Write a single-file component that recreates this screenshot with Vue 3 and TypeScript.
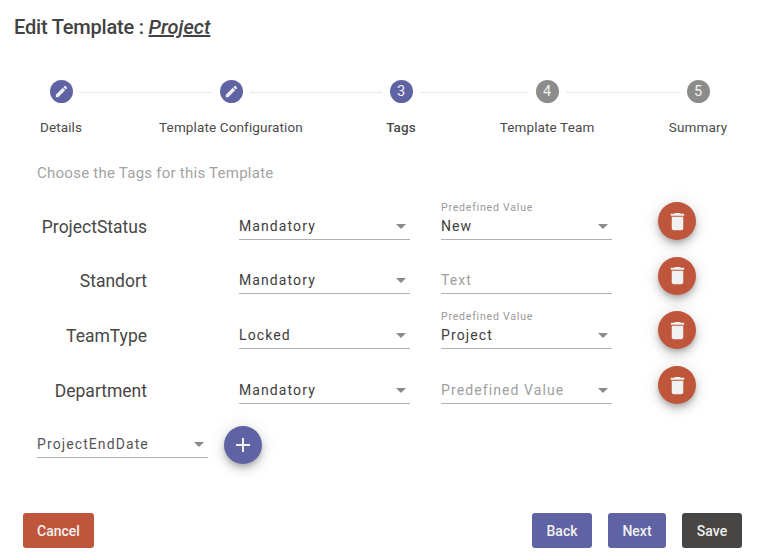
<script setup lang="ts">
interface Step { label: string; done: boolean; active: boolean; num: number }
interface Row { name: string; mode: string; floating: string; value: string; placeholder: string; arrow: boolean }

const steps: Step[] = [
  { label: 'Details', done: true, active: true, num: 1 },
  { label: 'Template Configuration', done: true, active: true, num: 2 },
  { label: 'Tags', done: false, active: true, num: 3 },
  { label: 'Template Team', done: false, active: false, num: 4 },
  { label: 'Summary', done: false, active: false, num: 5 },
]

const rows: Row[] = [
  { name: 'ProjectStatus', mode: 'Mandatory', floating: 'Predefined Value', value: 'New', placeholder: '', arrow: true },
  { name: 'Standort', mode: 'Mandatory', floating: '', value: '', placeholder: 'Text', arrow: false },
  { name: 'TeamType', mode: 'Locked', floating: 'Predefined Value', value: 'Project', placeholder: '', arrow: true },
  { name: 'Department', mode: 'Mandatory', floating: '', value: '', placeholder: 'Predefined Value', arrow: true },
]
</script>

<template>
  <div class="page">
    <h1 class="title"><span class="lead">Edit Template : </span><em>Project</em></h1>

    <div class="stepper">
      <template v-for="(s, i) in steps" :key="s.label">
        <div class="circle" :class="{ on: s.active }" :style="{ gridColumn: i * 2 + 1, gridRow: 1 }">
          <svg v-if="s.done" viewBox="0 0 24 24" class="pencil">
            <path d="M3 17.25V21h3.75L17.81 9.94l-3.75-3.75L3 17.25zM20.71 7.04c.39-.39.39-1.02 0-1.41l-2.34-2.34c-.39-.39-1.02-.39-1.41 0l-1.83 1.83 3.75 3.75 1.83-1.83z" />
          </svg>
          <span v-else>{{ s.num }}</span>
        </div>
        <div v-if="i < steps.length - 1" class="line" :style="{ gridColumn: i * 2 + 2, gridRow: 1 }"></div>
        <div class="step-label" :class="{ current: s.num === 3 }" :style="{ gridColumn: i * 2 + 1, gridRow: 2 }">{{ s.label }}</div>
      </template>
    </div>

    <p class="hint">Choose the Tags for this Template</p>

    <div class="rows">
      <div v-for="r in rows" :key="r.name" class="row">
        <div class="name">{{ r.name }}</div>
        <div class="field">
          <span class="text">{{ r.mode }}</span>
          <i class="arrow"></i>
        </div>
        <div class="field">
          <span v-if="r.floating" class="floating">{{ r.floating }}</span>
          <span v-if="r.value" class="text">{{ r.value }}</span>
          <span v-else class="text muted">{{ r.placeholder }}</span>
          <i v-if="r.arrow" class="arrow"></i>
        </div>
        <button class="fab red" type="button" aria-label="Delete">
          <svg viewBox="0 0 24 24" class="trash">
            <path d="M6 19c0 1.1.9 2 2 2h8c1.1 0 2-.9 2-2V7H6v12zM19 4h-3.5l-1-1h-5l-1 1H5v2h14V4z" />
          </svg>
        </button>
      </div>
    </div>

    <div class="add-row">
      <div class="field">
        <span class="text soft">ProjectEndDate</span>
        <i class="arrow"></i>
      </div>
      <button class="fab purple" type="button" aria-label="Add">
        <svg viewBox="0 0 24 24" class="plus">
          <path d="M19 13h-6v6h-2v-6H5v-2h6V5h2v6h6v2z" />
        </svg>
      </button>
    </div>

    <div class="actions">
      <button class="btn red cancel" type="button">Cancel</button>
      <div class="right">
        <button class="btn purple back" type="button">Back</button>
        <button class="btn purple next" type="button">Next</button>
        <button class="btn dark save" type="button">Save</button>
      </div>
    </div>
  </div>
</template>

<style>
html, body { margin: 0; background: #fff; }
</style>

<style scoped>
.page {
  width: 768px;
  height: 557px;
  box-sizing: border-box;
  overflow: hidden;
  font-family: Roboto, "Liberation Sans", sans-serif;
  color: #444;
  padding-top: 15px;
}
.title {
  margin: 0 0 0 14px;
  font-size: 20px;
  line-height: 24px;
  font-weight: 500;
  color: #424242;
}
.title .lead { letter-spacing: -0.2px; }
.title em { text-decoration: underline; }

.stepper {
  display: grid;
  grid-template-columns: 23px 147px 23px 147px 23px 123px 23px 128px 23px;
  grid-template-rows: 23px auto;
  row-gap: 16px;
  margin: 41px 0 0 49.5px;
  align-items: center;
}
.circle {
  width: 23px;
  height: 23px;
  border-radius: 50%;
  background: #8c8c8a;
  color: #f0f0f0;
  font-size: 14.5px;
  display: flex;
  align-items: center;
  justify-content: center;
}
.circle.on { background: #6063a3; }
.pencil { width: 15px; height: 15px; fill: #eee; }
.line { height: 1px; background: #e8e8e8; margin: 1px 8px 0 7.5px; }
.step-label {
  justify-self: center;
  white-space: nowrap;
  font-size: 13.5px;
  line-height: 16px;
  color: #4a4a4a;
  letter-spacing: 0.13px;
}
.step-label.current { font-weight: 500; }

.hint {
  margin: 29px 0 0 37px;
  font-size: 15px;
  line-height: 18px;
  letter-spacing: 0.25px;
  color: #a3a3a3;
}

.rows { margin-top: 12px; }
.row {
  height: 54.6px;
  display: flex;
  align-items: center;
}
.name {
  width: 147px;
  margin-right: 92px;
  text-align: right;
  font-size: 17.5px;
  line-height: 20px;
  padding-top: 11px;
  color: #474747;
}
.field {
  position: relative;
  box-sizing: border-box;
  width: 171px;
  height: 37px;
  border-bottom: 1px solid #b0b0b0;
  display: flex;
  align-items: flex-end;
  padding-bottom: 5px;
  flex: none;
}
.row .field + .field { margin-left: 31px; }
.text {
  font-size: 14px;
  line-height: 16px;
  letter-spacing: 1.1px;
  color: #3d3d3d;
}
.text.muted { color: #9e9e9e; }
.text.soft { color: #555; }
.floating {
  position: absolute;
  left: 0;
  top: -1px;
  font-size: 10.5px;
  line-height: 12px;
  letter-spacing: 0.8px;
  color: #999;
}
.arrow {
  position: absolute;
  right: 4px;
  bottom: 10px;
  width: 0;
  height: 0;
  border-left: 5px solid transparent;
  border-right: 5px solid transparent;
  border-top: 5px solid #8a8a8a;
}
.fab {
  width: 38px;
  height: 38px;
  border: 0;
  padding: 0;
  border-radius: 50%;
  display: flex;
  align-items: center;
  justify-content: center;
  box-shadow: 0 3px 5px -1px rgba(0,0,0,.2), 0 6px 10px 0 rgba(0,0,0,.14), 0 1px 18px 0 rgba(0,0,0,.12);
  flex: none;
}
.row .fab { margin-left: 46px; }
.fab.red { background: #bf563b; }
.fab.purple { background: #6063a3; }
.trash { width: 23px; height: 23px; fill: #f1f1f1; }
.plus { width: 24px; height: 24px; fill: #f1f1f1; }

.add-row {
  display: flex;
  align-items: center;
  margin: 3.5px 0 0 37px;
}
.add-row .fab { margin: 10px 0 0 16px; }

.actions {
  display: flex;
  justify-content: space-between;
  margin: 49.5px 26px 0 23px;
}
.right { display: flex; gap: 16px; }
.btn {
  height: 35px;
  border: 0;
  padding: 0;
  border-radius: 3px;
  font-family: inherit;
  font-size: 14px;
  font-weight: 500;
  color: #f0f0f0;
}
.btn.red { background: #bf563b; }
.btn.purple { background: #6063a3; }
.btn.dark { background: #474644; }
.cancel { width: 71px; }
.back { width: 60px; }
.next { width: 58px; }
.save { width: 60px; }
</style>
